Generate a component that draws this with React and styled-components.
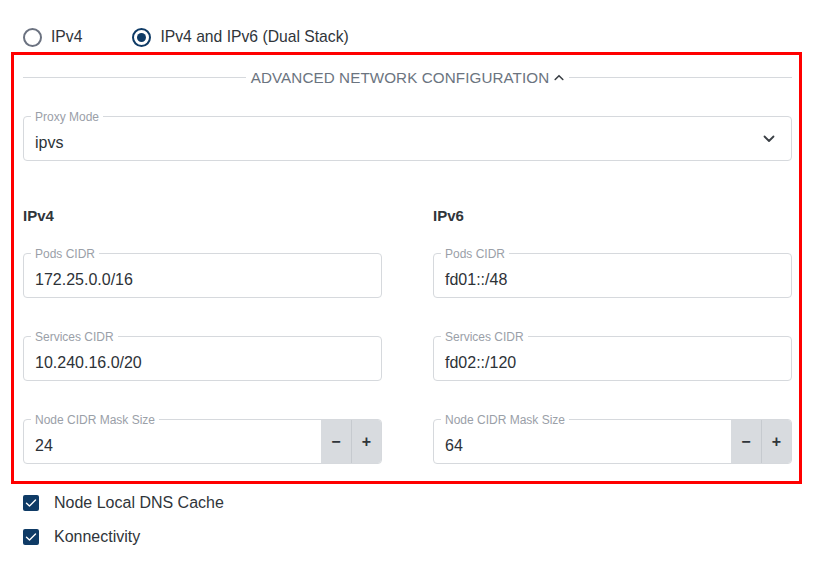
import styled, { createGlobalStyle } from 'styled-components'

const GlobalStyle = createGlobalStyle`
  body {
    margin: 0;
    background: #fff;
    font-family: "Liberation Sans", Arial, sans-serif;
    color: #30353a;
  }
`

const NAVY = '#0f3b66'

const Page = styled.div`
  width: 817px;
  height: 568px;
  box-sizing: border-box;
  padding-top: 27px;
`
const RadioRow = styled.div`
  display: flex;
  align-items: center;
  gap: 50px;
  padding-left: 23px;
  height: 20px;
`
const RadioOption = styled.label`
  display: flex;
  align-items: center;
  gap: 9px;
  font-size: 15.7px;
  color: #30353a;
`
const RadioCircle = styled.span`
  width: 19px;
  height: 19px;
  box-sizing: border-box;
  border-radius: 50%;
  border: 2px solid ${({ $checked }) => ($checked ? NAVY : '#6b7280')};
  display: flex;
  align-items: center;
  justify-content: center;
  &::after {
    content: '';
    width: 9px;
    height: 9px;
    border-radius: 50%;
    background: ${({ $checked }) => ($checked ? NAVY : 'transparent')};
  }
`
const Highlight = styled.section`
  margin: 5px 15px 0 11px;
  border: 3px solid #ff0000;
  padding: 10px 7px 17px 9px;
`
const Divider = styled.div`
  display: flex;
  align-items: center;
  gap: 5px;
  height: 24px;
  &::before,
  &::after {
    content: '';
    flex: 1;
    height: 1px;
    background: #d6d9dd;
  }
`
const DividerTitle = styled.div`
  display: flex;
  align-items: center;
  gap: 5px;
  font-size: 15.2px;
  color: #6b7480;
  letter-spacing: 0.1px;
`
const Field = styled.div`
  position: relative;
  height: 45px;
  box-sizing: border-box;
  border: 1px solid #d6d9dd;
  border-radius: 4px;
  display: flex;
  align-items: stretch;
  margin-top: ${({ $top }) => $top || 0}px;
`
const FieldLabel = styled.span`
  position: absolute;
  top: -7px;
  left: 7px;
  padding: 0 4px;
  background: #fff;
  font-size: 12px;
  line-height: 14px;
  color: #9aa0a8;
`
const FieldValue = styled.div`
  flex: 1;
  display: flex;
  align-items: center;
  padding: 8px 11px 0;
  font-size: 16px;
  color: #2d3237;
`
const SelectArrow = styled.div`
  display: flex;
  align-items: center;
  padding: 0 16px 0 0;
`
const Stepper = styled.div`
  display: flex;
  background: #d8dbdf;
  border-radius: 0 3px 3px 0;
`
const StepButton = styled.div`
  width: 30px;
  display: flex;
  align-items: center;
  justify-content: center;
  font-size: 16px;
  font-weight: bold;
  color: #30353a;
  & + & {
    border-left: 1px solid #c6cacf;
    width: 29px;
  }
`
const Columns = styled.div`
  display: grid;
  grid-template-columns: 359px 359px;
  column-gap: 51px;
  margin-top: 43px;
`
const Column = styled.div`
  display: flex;
  flex-direction: column;
`
const Heading = styled.h3`
  margin: 0;
  font-size: 15px;
  font-weight: bold;
  line-height: 24px;
  color: #30353a;
`
const CheckList = styled.div`
  display: flex;
  flex-direction: column;
  gap: 16px;
  padding: 10px 0 0 23px;
`
const CheckRow = styled.label`
  display: flex;
  align-items: center;
  gap: 15px;
  font-size: 16px;
  color: #30353a;
  height: 18px;
`
const CheckBox = styled.span`
  width: 16px;
  height: 16px;
  border-radius: 2px;
  background: ${NAVY};
  display: flex;
  align-items: center;
  justify-content: center;
`

const ChevronUp = () => (
  <svg width="10" height="7" viewBox="0 0 10 7" fill="none">
    <path d="M1.2 5.5 L5 1.7 L8.8 5.5" stroke="#3a3f45" strokeWidth="1.6" strokeLinecap="round" strokeLinejoin="round" />
  </svg>
)

const ChevronDown = () => (
  <svg width="12" height="8" viewBox="0 0 12 8" fill="none">
    <path d="M1.5 1.5 L6 6 L10.5 1.5" stroke="#3a3f45" strokeWidth="1.8" strokeLinecap="round" strokeLinejoin="round" />
  </svg>
)

const Check = () => (
  <svg width="12" height="10" viewBox="0 0 12 10" fill="none">
    <path d="M1.5 5.2 L4.5 8 L10.5 2" stroke="#fff" strokeWidth="1.4" strokeLinecap="round" strokeLinejoin="round" />
  </svg>
)

function InputField({ label, value, top }) {
  return (
    <Field $top={top}>
      <FieldLabel>{label}</FieldLabel>
      <FieldValue>{value}</FieldValue>
    </Field>
  )
}

function NumberField({ label, value, top }) {
  return (
    <Field $top={top}>
      <FieldLabel>{label}</FieldLabel>
      <FieldValue>{value}</FieldValue>
      <Stepper>
        <StepButton>−</StepButton>
        <StepButton>+</StepButton>
      </Stepper>
    </Field>
  )
}

const families = [
  { name: 'IPv4', pods: '172.25.0.0/16', services: '10.240.16.0/20', mask: '24' },
  { name: 'IPv6', pods: 'fd01::/48', services: 'fd02::/120', mask: '64' },
]

export default function App() {
  return (
    <Page>
      <GlobalStyle />
      <RadioRow>
        <RadioOption>
          <RadioCircle />
          IPv4
        </RadioOption>
        <RadioOption>
          <RadioCircle $checked />
          IPv4 and IPv6 (Dual Stack)
        </RadioOption>
      </RadioRow>
      <Highlight>
        <Divider>
          <DividerTitle>
            ADVANCED NETWORK CONFIGURATION
            <ChevronUp />
          </DividerTitle>
        </Divider>
        <Field $top={27}>
          <FieldLabel>Proxy Mode</FieldLabel>
          <FieldValue>ipvs</FieldValue>
          <SelectArrow>
            <ChevronDown />
          </SelectArrow>
        </Field>
        <Columns>
          {families.map((f) => (
            <Column key={f.name}>
              <Heading>{f.name}</Heading>
              <InputField label="Pods CIDR" value={f.pods} top={25} />
              <InputField label="Services CIDR" value={f.services} top={38} />
              <NumberField label="Node CIDR Mask Size" value={f.mask} top={38} />
            </Column>
          ))}
        </Columns>
      </Highlight>
      <CheckList>
        <CheckRow>
          <CheckBox>
            <Check />
          </CheckBox>
          Node Local DNS Cache
        </CheckRow>
        <CheckRow>
          <CheckBox>
            <Check />
          </CheckBox>
          Konnectivity
        </CheckRow>
      </CheckList>
    </Page>
  )
}
